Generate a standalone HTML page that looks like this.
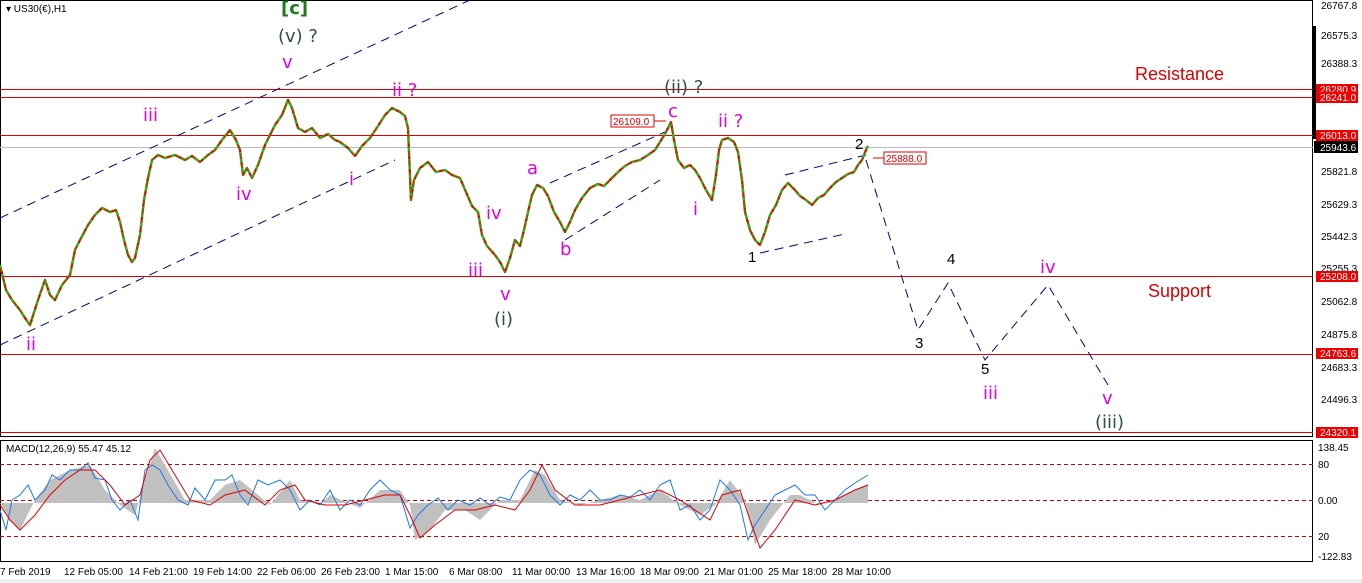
<!DOCTYPE html><html><head><meta charset="utf-8"><style>
body{margin:0;width:1362px;height:583px;background:#fff;overflow:hidden;font-family:"Liberation Sans",sans-serif}
svg{display:block}
</style></head><body>
<svg width="1362" height="583" xmlns="http://www.w3.org/2000/svg" font-family="Liberation Sans, DejaVu Sans, sans-serif">
<rect width="1362" height="583" fill="#fff"/>
<rect x="0.5" y="0.5" width="1312" height="436" fill="none" stroke="#000"/>
<rect x="0.5" y="440.5" width="1312" height="121" fill="none" stroke="#000"/>
<rect x="1313" y="26" width="3" height="113" fill="#000"/>
<g stroke="#d00" stroke-width="1">
<line x1="0" y1="89.5" x2="1313" y2="89.5"/><line x1="0" y1="97.5" x2="1313" y2="97.5"/>
<line x1="0" y1="135.5" x2="1313" y2="135.5"/><line x1="0" y1="276.5" x2="1313" y2="276.5"/>
<line x1="0" y1="354.5" x2="1313" y2="354.5"/><line x1="0" y1="432.5" x2="1313" y2="432.5"/>
</g>
<line x1="0" y1="147.5" x2="1313" y2="147.5" stroke="#bbb"/>
<g stroke="#00008b" stroke-width="1" stroke-dasharray="9,6" fill="none">
<line x1="0" y1="218" x2="470" y2="0"/>
<line x1="0" y1="345" x2="395" y2="160"/>
<line x1="550" y1="183" x2="665" y2="132"/>
<line x1="565" y1="240" x2="660" y2="180"/>
<line x1="785" y1="175" x2="866" y2="155"/>
<line x1="760" y1="253" x2="845" y2="234"/>
<polyline points="866,160 918,330 948,283 985,360 1048,285 1108,385"/>
</g>
<g fill="none" stroke-linejoin="round">
<polyline stroke="#8b5a00" stroke-width="2.4" points="0,265 6,290 12,300 20,310 25,318 30,325 38,300 45,280 50,295 55,300 62,285 70,275 75,250 80,240 88,225 95,215 102,208 110,212 116,210 120,222 124,240 128,255 132,262 135,258 140,235 144,200 148,178 152,160 158,155 165,158 175,155 185,160 192,156 200,162 208,155 215,150 222,140 230,130 236,140 240,150 243,175 247,168 252,178 258,165 265,145 270,135 275,125 282,115 288,100 292,108 298,128 305,132 312,128 320,138 328,134 335,140 340,142 348,148 355,156 362,146 370,138 378,126 385,115 392,108 400,112 405,116 408,128 411,200 414,180 420,168 428,162 436,172 445,170 452,175 460,178 466,192 472,206 478,212 482,235 487,246 495,255 500,262 505,272 510,258 515,240 520,246 524,230 528,212 532,195 537,185 543,188 548,196 554,212 560,222 565,232 570,222 575,210 582,198 590,188 598,184 604,186 610,180 618,172 625,166 632,162 640,160 648,155 655,150 660,142 665,134 671,122 674,140 678,160 684,168 690,165 695,170 700,178 706,190 712,200 716,175 719,150 722,140 728,138 734,142 738,152 742,180 745,212 750,230 755,240 760,245 765,232 770,215 776,205 782,190 788,183 795,190 800,196 806,200 812,205 818,198 824,195 830,188 836,182 842,178 848,174 854,172 858,165 862,160 866,150 868,146"/>
<polyline stroke="#2db82d" stroke-width="2.4" stroke-dasharray="3,6" points="0,265 6,290 12,300 20,310 25,318 30,325 38,300 45,280 50,295 55,300 62,285 70,275 75,250 80,240 88,225 95,215 102,208 110,212 116,210 120,222 124,240 128,255 132,262 135,258 140,235 144,200 148,178 152,160 158,155 165,158 175,155 185,160 192,156 200,162 208,155 215,150 222,140 230,130 236,140 240,150 243,175 247,168 252,178 258,165 265,145 270,135 275,125 282,115 288,100 292,108 298,128 305,132 312,128 320,138 328,134 335,140 340,142 348,148 355,156 362,146 370,138 378,126 385,115 392,108 400,112 405,116 408,128 411,200 414,180 420,168 428,162 436,172 445,170 452,175 460,178 466,192 472,206 478,212 482,235 487,246 495,255 500,262 505,272 510,258 515,240 520,246 524,230 528,212 532,195 537,185 543,188 548,196 554,212 560,222 565,232 570,222 575,210 582,198 590,188 598,184 604,186 610,180 618,172 625,166 632,162 640,160 648,155 655,150 660,142 665,134 671,122 674,140 678,160 684,168 690,165 695,170 700,178 706,190 712,200 716,175 719,150 722,140 728,138 734,142 738,152 742,180 745,212 750,230 755,240 760,245 765,232 770,215 776,205 782,190 788,183 795,190 800,196 806,200 812,205 818,198 824,195 830,188 836,182 842,178 848,174 854,172 858,165 862,160 866,150 868,146"/>
<polyline stroke="#e00000" stroke-width="2" stroke-dasharray="2,11" stroke-dashoffset="6" points="0,265 6,290 12,300 20,310 25,318 30,325 38,300 45,280 50,295 55,300 62,285 70,275 75,250 80,240 88,225 95,215 102,208 110,212 116,210 120,222 124,240 128,255 132,262 135,258 140,235 144,200 148,178 152,160 158,155 165,158 175,155 185,160 192,156 200,162 208,155 215,150 222,140 230,130 236,140 240,150 243,175 247,168 252,178 258,165 265,145 270,135 275,125 282,115 288,100 292,108 298,128 305,132 312,128 320,138 328,134 335,140 340,142 348,148 355,156 362,146 370,138 378,126 385,115 392,108 400,112 405,116 408,128 411,200 414,180 420,168 428,162 436,172 445,170 452,175 460,178 466,192 472,206 478,212 482,235 487,246 495,255 500,262 505,272 510,258 515,240 520,246 524,230 528,212 532,195 537,185 543,188 548,196 554,212 560,222 565,232 570,222 575,210 582,198 590,188 598,184 604,186 610,180 618,172 625,166 632,162 640,160 648,155 655,150 660,142 665,134 671,122 674,140 678,160 684,168 690,165 695,170 700,178 706,190 712,200 716,175 719,150 722,140 728,138 734,142 738,152 742,180 745,212 750,230 755,240 760,245 765,232 770,215 776,205 782,190 788,183 795,190 800,196 806,200 812,205 818,198 824,195 830,188 836,182 842,178 848,174 854,172 858,165 862,160 866,150 868,146"/>
</g>
<text x="6" y="12" font-size="10" fill="#000">▾ US30(€),H1</text>
<g font-size="18" fill="#e000e0" font-family="DejaVu Sans, sans-serif">
<text x="282" y="68">v</text><text x="143" y="121">iii</text><text x="236" y="200">iv</text>
<text x="392" y="96">ii ?</text><text x="349" y="185">i</text><text x="26" y="350">ii</text>
<text x="527" y="174">a</text><text x="560" y="255">b</text><text x="486" y="219">iv</text>
<text x="468" y="276">iii</text><text x="500" y="300">v</text><text x="668" y="117">c</text>
<text x="718" y="127">ii ?</text><text x="693" y="215">i</text>
<text x="1040" y="273">iv</text><text x="983" y="399">iii</text><text x="1102" y="404">v</text>
</g>
<g font-size="18" fill="#2f4f4f" font-family="DejaVu Sans, sans-serif">
<text x="278" y="42">(v) ?</text><text x="664" y="93">(ii) ?</text>
<text x="494" y="325">(i)</text><text x="1095" y="428">(iii)</text>
</g>
<text x="281" y="14" font-size="18" font-weight="bold" fill="#1e7a1e" font-family="DejaVu Sans, sans-serif">[c]</text>
<g font-size="15" fill="#000"><text x="855" y="149">2</text><text x="748" y="262">1</text><text x="947" y="264">4</text><text x="915" y="348">3</text><text x="981" y="374">5</text></g>
<text x="1135" y="80" font-size="18" fill="#d00">Resistance</text>
<text x="1148" y="297" font-size="18" fill="#d00">Support</text>
<rect x="611" y="115" width="43" height="12" fill="#fff" stroke="#d00"/><text x="613" y="125" font-size="10" fill="#d00">26109.0</text>
<line x1="654" y1="121" x2="666" y2="121" stroke="#d00"/>
<rect x="884" y="152" width="42" height="12" fill="#fff" stroke="#d00"/><text x="886" y="162" font-size="10" fill="#d00">25888.0</text>
<line x1="873" y1="158" x2="884" y2="158" stroke="#d00"/>
<g stroke="#c00" stroke-dasharray="4,3"><line x1="0" y1="464.5" x2="1313" y2="464.5"/><line x1="0" y1="500.5" x2="1313" y2="500.5"/><line x1="0" y1="536.5" x2="1313" y2="536.5"/></g>
<path fill="#c0c0c0" d="M0,503 L10,520 20,530 35,500 50,480 70,470 90,465 105,490 120,505 135,515 145,480 155,448 165,465 185,500 210,500 225,485 240,480 270,505 290,480 300,500 320,505 330,495 360,508 380,490 400,490 410,505 415,540 430,530 445,510 465,510 480,520 500,500 520,500 535,470 545,475 560,500 580,505 600,500 620,495 640,500 660,490 680,505 700,515 715,505 730,480 745,500 755,545 770,520 790,495 800,495 820,505 840,498 855,490 868,484 L868,503 Z"/>
<polyline fill="none" stroke="#1e78e6" stroke-width="1" points="0,510 6,530 12,500 20,495 28,485 35,500 45,490 52,475 60,480 70,470 80,470 88,463 95,478 105,480 112,500 120,510 130,500 138,520 145,470 152,465 160,470 168,485 178,500 188,505 195,488 205,500 215,480 225,480 232,475 240,495 248,505 258,480 268,485 280,480 290,490 300,510 310,500 320,505 330,490 340,510 350,500 360,505 370,490 380,480 390,490 400,495 410,528 418,515 428,505 438,498 448,510 458,500 470,505 480,498 490,505 500,497 510,500 520,480 530,470 540,475 550,495 560,505 570,495 580,500 590,490 600,500 610,500 620,495 630,497 640,490 650,500 660,485 670,480 680,510 690,505 700,520 710,510 720,480 730,490 740,505 748,540 755,525 765,510 775,495 785,490 795,485 805,495 815,495 825,510 835,500 845,490 855,483 868,475"/>
<polyline fill="none" stroke="#d00" stroke-width="1" points="0,505 10,520 20,530 35,515 50,495 65,480 80,470 95,470 110,485 125,505 140,495 150,460 160,450 172,470 190,500 210,505 225,495 245,490 265,505 280,490 295,485 305,500 325,505 345,505 365,500 385,495 400,495 410,515 420,538 435,525 455,510 475,510 495,505 515,510 530,490 542,465 555,490 575,505 600,505 620,500 640,495 660,490 680,500 695,510 710,520 722,495 740,490 750,520 760,548 775,530 795,500 815,505 835,500 855,490 868,485"/>
<text x="6" y="452" font-size="10" fill="#000">MACD(12,26,9) 55.47 45.12</text>
<g font-size="10" fill="#000">
<text x="1321" y="9">26767.8</text><text x="1321" y="39">26575.3</text><text x="1321" y="67">26388.3</text>
<text x="1321" y="175">25821.8</text><text x="1321" y="208">25629.3</text><text x="1321" y="240">25442.3</text><text x="1321" y="272">25255.3</text>
<text x="1321" y="305">25062.8</text><text x="1321" y="338">24875.8</text><text x="1321" y="371">24683.3</text><text x="1321" y="403">24496.3</text>
<text x="1318" y="451">138.45</text><text x="1318" y="468">80</text><text x="1318" y="504">0.00</text><text x="1318" y="540">20</text><text x="1318" y="560">-122.83</text>
</g>
<g font-size="10">
<rect x="1316" y="84" width="42" height="11" fill="#e00"/><text x="1320" y="93" fill="#fff">26280.9</text>
<rect x="1316" y="92" width="42" height="11" fill="#e00"/><text x="1320" y="101" fill="#fff">26241.0</text>
<rect x="1316" y="130" width="42" height="11" fill="#e00"/><text x="1320" y="139" fill="#fff">26013.0</text>
<rect x="1314" y="141" width="44" height="12" fill="#000"/><text x="1320" y="151" fill="#fff">25943.6</text>
<rect x="1316" y="271" width="42" height="11" fill="#e00"/><text x="1320" y="280" fill="#fff">25208.0</text>
<rect x="1316" y="348" width="42" height="11" fill="#e00"/><text x="1320" y="357" fill="#fff">24763.6</text>
<rect x="1316" y="427" width="42" height="11" fill="#e00"/><text x="1320" y="436" fill="#fff">24320.1</text>
</g>
<g font-size="10" fill="#000">
<text x="0" y="575">7 Feb 2019</text><text x="64" y="575">12 Feb 05:00</text><text x="129" y="575">14 Feb 21:00</text><text x="193" y="575">19 Feb 14:00</text><text x="257" y="575">22 Feb 06:00</text><text x="321" y="575">26 Feb 23:00</text><text x="385" y="575">1 Mar 15:00</text><text x="449" y="575">6 Mar 08:00</text><text x="512" y="575">11 Mar 00:00</text><text x="576" y="575">13 Mar 16:00</text><text x="640" y="575">18 Mar 09:00</text><text x="704" y="575">21 Mar 01:00</text><text x="768" y="575">25 Mar 18:00</text><text x="832" y="575">28 Mar 10:00</text>
</g>
<rect x="0" y="579" width="1362" height="4" fill="#f0f0f0"/>
</svg>
</body></html>
